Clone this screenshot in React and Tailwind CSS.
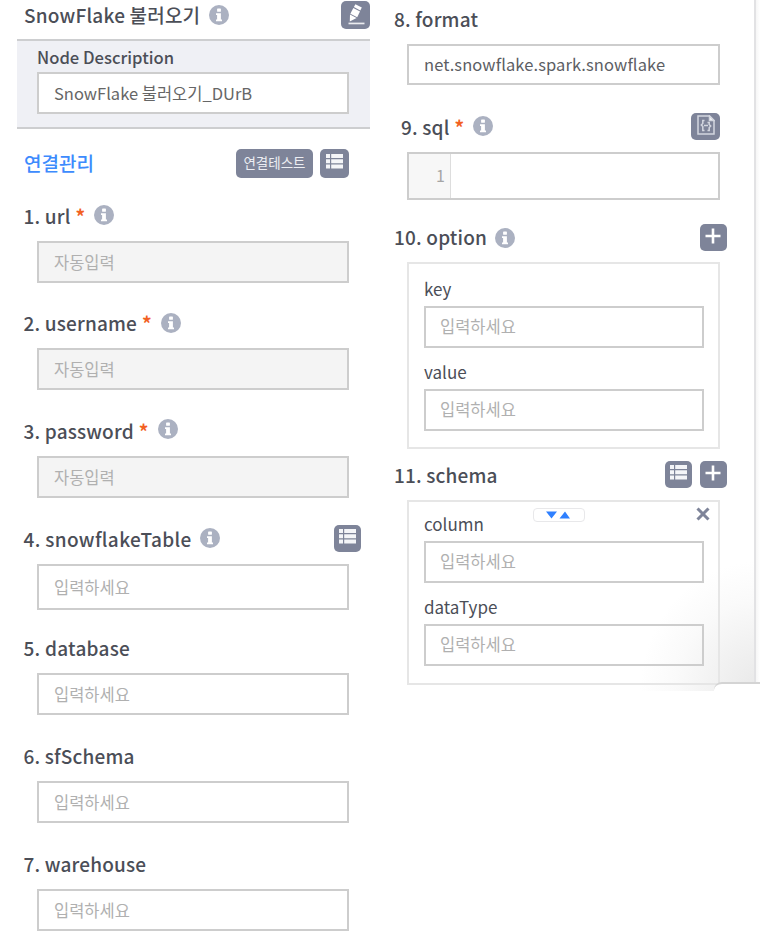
const INPUT = "flex shrink-0 items-center border-2 border-[#cdcdcd] px-[15px] text-[16.5px] leading-none";

function InfoIcon({ className = "" }) {
  return (
    <svg viewBox="0 0 20 20" className={`h-5 w-5 shrink-0 ${className}`}>
      <circle cx="10" cy="10" r="10" fill="#abb1c1" />
      <rect x="8.1" y="3.6" width="3.8" height="3.2" rx="0.6" fill="#fff" />
      <path d="M7 8.2h4.9v6.3H13V16.3H7v-1.8h1.1V10H7z" fill="#fff" />
    </svg>
  );
}

function ListIcon() {
  return (
    <svg viewBox="0 0 17 15" className="mb-1 h-[15px] w-[17px]" fill="#f4f5f8">
      <path d="M0 0h4v4H0zM5.2 0H17v4H5.2zM0 5.3h4v4H0zM5.2 5.3H17v4H5.2zM0 10.6h4v4H0zM5.2 10.6H17v4H5.2z" />
    </svg>
  );
}

function PlusIcon() {
  return (
    <svg viewBox="0 0 16 16" className="mb-[3px] mr-px h-4 w-4" stroke="#fff" strokeWidth="2.6">
      <path d="M8 0.5v15M0.5 8h15" />
    </svg>
  );
}

function PencilIcon() {
  return (
    <svg viewBox="0 0 20 22" className="h-[22px] w-5" fill="#fff">
      <path d="M9.400 .2l6.400 3.400-1.500 2.900-6.400-3.400z" />
      <path d="M7.300 4.100l6.700 3.500-2.800 5.700-6.800-3.600z" />
      <path d="M4 10.500l6.600 3.500-6.800 3.600z" />
      <path d="M2.500 18.600h16v1.700h-16z" opacity="0.85" />
    </svg>
  );
}

function CodeFileIcon() {
  return (
    <svg viewBox="0 0 18 20" className="mb-0.5 h-5 w-[18px]" fill="none" stroke="#d3d6df" strokeWidth="1.5">
      <path d="M1 1h11.5L17 5.500V19H1z" />
      <path d="M12.500 1v4.500H17z" fill="#fff" />
      <path d="M7.500 5.500H5.800v3L4.300 10l1.500 1.500v4h1.700M10.500 7.500h1.700v2L13.700 11l-1.500 1.500v3h-1.700" />
      <path d="M7 10.500h4" />
    </svg>
  );
}

function IconButton({ children, className = "h-[27px] w-[27px]" }) {
  return (
    <button className={`flex shrink-0 items-center justify-center rounded-[5px] bg-[#7e8499] ${className}`}>
      {children}
    </button>
  );
}

function Label({ children, required, info, infoClass = "", tracking = "tracking-[0.17px]" }) {
  return (
    <div className={`flex items-center whitespace-nowrap text-[19px] font-medium leading-none ${tracking}`}>
      <span className="mb-[3px]">{children}</span>
      {required && <span className="mb-[3px] ml-[5px] font-bold text-[#f26022]">*</span>}
      {info && <InfoIcon className={infoClass} />}
    </div>
  );
}

function Field({ label, required, info, infoClass, tracking, action, placeholder, height, boxClass }) {
  return (
    <div className={`shrink-0 ${height}`}>
      <div className="flex h-12 items-center justify-between pl-[23.500px] pr-[19px]">
        <Label required={required} info={info} infoClass={infoClass} tracking={tracking}>{label}</Label>
        {action}
      </div>
      <div className={`${INPUT} ml-[37px] w-[312px] text-[#b0b0b0] ${boxClass}`}>{placeholder}</div>
    </div>
  );
}

function SubField({ label, className = "" }) {
  return (
    <div className={className}>
      <div className="flex h-[34px] items-center pb-px text-[17px] leading-none">{label}</div>
      <div className={`${INPUT} h-[42px] w-[280px] pl-[14px] text-[#b0b0b0]`}><span className="pb-px">입력하세요</span></div>
    </div>
  );
}

export default function App() {
  return (
    <div className="relative flex h-[943px] w-[760px] overflow-hidden bg-white font-['Noto_Sans_CJK_KR',sans-serif] text-[#4b4e57]">
      <div className="flex w-[380px] shrink-0 flex-col">
        <div className="flex h-[39px] shrink-0 items-start justify-between pl-[24px] pr-[10px] pt-[1px]">
          <div className="flex h-7 items-center text-[19px] font-medium leading-none tracking-[0.2px]">
            <span className="mb-[2px]">SnowFlake 불러오기</span>
            <InfoIcon className="ml-[9px]" />
          </div>
          <IconButton className="h-7 w-[29px]"><PencilIcon /></IconButton>
        </div>
        <div className="ml-[17px] h-[90px] w-[353px] shrink-0 border-y-2 border-[#cdced0] bg-[#eff0f5] pl-5">
          <div className="flex h-[31px] items-center pt-[2px] text-[16.6px] font-medium leading-none">Node Description</div>
          <div className={`${INPUT} h-[42px] w-[312px] bg-white text-[#666]`}>SnowFlake 불러오기_DUrB</div>
        </div>
        <div className="flex h-16 shrink-0 items-center justify-between pb-0 pl-6 pr-[31px] pt-[5px]">
          <div className="mb-[2px] text-[19px] font-medium leading-none text-[#3d8bfd]">연결관리</div>
          <div className="flex gap-[7px]">
            <button className="flex h-[29px] w-[77px] items-center justify-center rounded-[5px] bg-[#7e8499] pb-px text-[13.500px] leading-none text-[#eceef3]">
              연결테스트
            </button>
            <IconButton className="h-[29px] w-[29px]"><ListIcon /></IconButton>
          </div>
        </div>
        <Field label="1. url" required info infoClass="mb-1 ml-[9px]" placeholder="자동입력" height="h-[107px]" boxClass="h-[42px] bg-[#f4f4f4]" />
        <Field label="2. username" required info infoClass="mb-[2px] ml-[9px]" placeholder="자동입력" height="h-[108px]" boxClass="h-[42px] bg-[#f4f4f4]" />
        <Field label="3. password" required info infoClass="mb-[6px] ml-[9px]" placeholder="자동입력" height="h-[108px]" boxClass="h-[42px] bg-[#f4f4f4]" />
        <Field label="4. snowflakeTable" info infoClass="mb-1 ml-2" tracking="tracking-[0.34px]" placeholder="입력하세요" height="h-[109px]" boxClass="h-[46px]"
          action={<div className="pb-1"><IconButton><ListIcon /></IconButton></div>} />
        <Field label="5. database" tracking="tracking-[0.25px]" placeholder="입력하세요" height="h-[108px]" boxClass="h-[42px]" />
        <Field label="6. sfSchema" placeholder="입력하세요" height="h-[108px]" boxClass="h-[42px]" />
        <Field label="7. warehouse" placeholder="입력하세요" height="h-[102px]" boxClass="h-[42px]" />
      </div>

      <div className="flex h-[691px] w-[380px] shrink-0 bg-[radial-gradient(ellipse_120px_130px_at_100%_100%,#e8e8e8_0%,#f1f1f1_35%,#fafafa_70%,#fff_100%)]">
        <div className="flex w-[374px] flex-col pl-[14px]">
          <div className="flex h-11 shrink-0 items-center pb-[4px]">
            <Label>8. format</Label>
          </div>
          <div className={`${INPUT} ml-[13px] h-[41px] w-[313px] tracking-[0.1px] text-[#5c5e64]`}>net.snowflake.spark.snowflake</div>
          <div className="flex h-[67px] shrink-0 items-center justify-between pl-[7px] pr-[34px] pt-[19px]">
            <Label required info infoClass="mb-1 ml-[9px]">9. sql</Label>
            <div className="pb-1"><IconButton className="h-[27px] w-[29px]"><CodeFileIcon /></IconButton></div>
          </div>
          <div className="ml-[13px] flex h-12 w-[313px] shrink-0 border-2 border-[#cdcdcd] bg-white">
            <div className="flex w-[42px] items-center justify-end border-r border-[#ddd] bg-[#f7f7f7] pb-[3px] pr-[5px] text-[16px] leading-none text-[#a5a5a5]">1</div>
          </div>
          <div className="flex h-[62px] shrink-0 items-center justify-between pr-[27px] pt-[14px]">
            <Label info infoClass="ml-2">10. option</Label>
            <div className="pb-[14px] pt-[12px]"><IconButton><PlusIcon /></IconButton></div>
          </div>
          <div className="ml-[13px] h-[187px] w-[313px] shrink-0 border-2 border-[#e6e6e6] pl-[15px] pt-2">
            <SubField label="key" />
            <SubField label="value" className="mt-[7px]" />
          </div>
          <div className="flex h-[51px] shrink-0 items-center justify-between pr-[27px]">
            <div className="pt-[3px]"><Label>11. schema</Label></div>
            <div className="flex gap-2 pb-px">
              <IconButton><ListIcon /></IconButton>
              <IconButton><PlusIcon /></IconButton>
            </div>
          </div>
          <div className="relative ml-[13px] h-[185px] w-[313px] shrink-0 border-2 border-[#e6e6e6] pl-[15px] pt-[5px]">
            <SubField label="column" />
            <SubField label="dataType" className="mt-[7px]" />
            <div className="absolute left-[124px] top-[6px] flex h-[14px] w-[52px] items-center justify-center rounded-[4px] border border-[#e8e8ea] bg-white">
              <svg viewBox="0 0 24 8" className="mr-[2px] h-2 w-6" fill="#2f80ff">
                <path d="M0 .5h11L5.500 7.500zM13.500 7.500h10.500L19 .5z" />
              </svg>
            </div>
            <svg viewBox="0 0 14 14" className="absolute right-[8px] top-[5px] h-[14px] w-[14px]" stroke="#7e8499" strokeWidth="3">
              <path d="M1.500 1.500l11 11M12.500 1.500l-11 11" />
            </svg>
          </div>
        </div>
        <div className="h-[682px] w-[6px] border-l-2 border-[#e2e2e4] bg-gradient-to-r from-[#f6f6f6] to-white" />
      </div>
      <div className="absolute left-[714px] top-[682px] h-[12px] w-[50px] rounded-tl-[8px] border-t-2 border-[#d4d4d4] bg-white" />
    </div>
  );
}
